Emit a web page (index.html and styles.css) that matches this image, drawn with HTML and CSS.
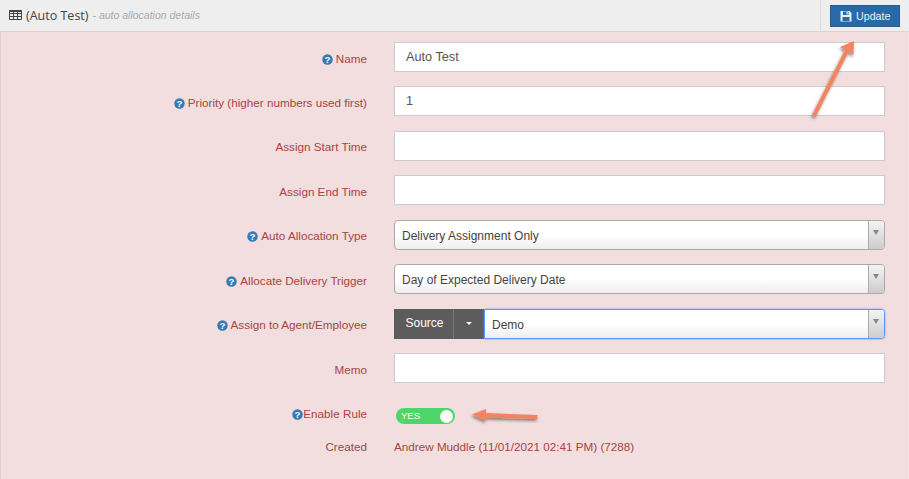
FILE: index.html
```html
<!DOCTYPE html>
<html lang="en">
<head>
<meta charset="utf-8">
<title>Auto Test</title>
<link rel="stylesheet" href="styles.css">
</head>
<body>
<header class="topbar">
  <div class="title">
    <svg class="table-icon" width="13" height="12" viewBox="0 0 13 12"><path d="M.5 1.500h12v9H.5zM.5 4.500h12M.5 7.500h12M4.500 1.500v9M8.500 1.500v9" fill="none" stroke="#444" stroke-width="1"/><path d="M.5 1h12v2h-12z" fill="#444"/></svg>
    <span class="title-main">(Auto Test)</span>
    <span class="title-sub">- auto allocation details</span>
  </div>
  <div class="actions">
    <button class="btn-update" type="button">
      <svg width="12" height="12" viewBox="0 0 12 12"><path d="M.5 1h9l2 2v8.500H.5z" fill="#e4eef8"/><path d="M3 1.500h5.500v3.500H3zM2.500 7h7v4H2.500z" fill="#2a69a8"/><path d="M6.500 2h1.300v2.500H6.500z" fill="#e4eef8"/></svg>
      Update
    </button>
  </div>
</header>
<main class="form">
  <div class="row"><label class="lbl"><svg class="help"><use href="#q"/></svg>Name</label><div class="field"><input class="text" value="Auto Test"></div></div>
  <div class="row"><label class="lbl"><svg class="help"><use href="#q"/></svg>Priority (higher numbers used first)</label><div class="field"><input class="text" value="1"></div></div>
  <div class="row"><label class="lbl">Assign Start Time</label><div class="field"><input class="text"></div></div>
  <div class="row"><label class="lbl">Assign End Time</label><div class="field"><input class="text"></div></div>
  <div class="row"><label class="lbl"><svg class="help"><use href="#q"/></svg>Auto Allocation Type</label><div class="field"><div class="select"><span class="sel-text">Delivery Assignment Only</span><span class="sel-arrow"></span></div></div></div>
  <div class="row"><label class="lbl"><svg class="help"><use href="#q"/></svg>Allocate Delivery Trigger</label><div class="field"><div class="select"><span class="sel-text">Day of Expected Delivery Date</span><span class="sel-arrow"></span></div></div></div>
  <div class="row"><label class="lbl"><svg class="help"><use href="#q"/></svg>Assign to Agent/Employee</label><div class="field group"><span class="src">Source</span><span class="src-caret"><i></i></span><div class="select focus"><span class="sel-text">Demo</span><span class="sel-arrow"></span></div></div></div>
  <div class="row"><label class="lbl">Memo</label><div class="field"><input class="text"></div></div>
  <div class="row row-toggle"><label class="lbl lbl-toggle"><svg class="help tight"><use href="#q"/></svg>Enable Rule</label><div class="field"><span class="toggle"><span class="yes">YES</span><span class="knob"></span></span></div></div>
  <div class="row row-created"><label class="lbl">Created</label><div class="field value">Andrew Muddle (11/01/2021 02:41 PM) (7288)</div></div>
</main>
<svg class="defs" width="0" height="0"><defs><symbol id="q" viewBox="0 0 12 12"><circle cx="6" cy="6" r="5.700" fill="#337ab7"/><text x="6" y="9.700" text-anchor="middle" font-family="Liberation Sans" font-weight="700" font-size="10.500" fill="#fff">?</text></symbol></defs></svg>
<svg class="arrows" width="909" height="479" viewBox="0 0 909 479">
  <defs><filter id="sh" x="-30%" y="-30%" width="160%" height="160%"><feDropShadow dx="-1" dy="2" stdDeviation="1.500" flood-color="#000" flood-opacity=".45"/></filter></defs>
  <g filter="url(#sh)" fill="#f4845f">
    <path d="M854 41l-.5 14-5-3-33 65-3.500-2 33-65-5-3z"/>
    <path d="M472 414.500l14-5.500v4l51.500 2v4l-51.500-1.500v3.500z"/>
  </g>
</svg>
</body>
</html>
```
FILE: styles.css
```css
* { box-sizing: border-box; }
html, body { margin: 0; height: 100%; overflow: hidden; }
body { display: flex; flex-direction: column; font-family: "Liberation Sans", Arial, sans-serif; font-size: 11.7px; background: #f2dede; color: #a94442; position: relative; }
.topbar { display: flex; justify-content: space-between; flex: none; height: 32px; background: #eee; border-bottom: 1px solid #ddd; }
.title { display: flex; align-items: center; padding-left: 9px; padding-bottom: 1px; }
.table-icon { margin-right: 4px; }
.title-main { font-family: "Open Sans", sans-serif; font-size: 12.5px; color: #444; }
.title-sub { font-style: italic; font-size: 10.5px; color: #aaa; margin-left: 4px; }
.actions { width: 89px; border-left: 1px solid #ddd; padding: 5px 0 0 9px; }
.btn-update { display: flex; align-items: center; gap: 4px; width: 70px; height: 22px; padding: 0 0 0 9px; background: #2a69a8; border: 1px solid #285e8e; color: #e8f0f8; font: 10.700px "Liberation Sans", Arial, sans-serif; }
.form { flex: 1; padding-top: 10px; border: 1px solid #ebcccc; border-bottom: 0; border-right-color: #f5e4e4; margin-top: -1px; }
.row { display: flex; align-items: center; height: 30px; margin-bottom: 14.45px; }
.lbl { width: 366px; text-align: right; line-height: 30px; padding-top: 3px; flex: none; }
.help { width: 11px; height: 11px; vertical-align: -2px; margin-right: 3px; }
.help.tight { margin-right: 0; }
.field { margin-left: 27px; width: 491px; flex: none; }
.text { display: block; width: 100%; height: 30px; padding: 0 11px; background: #fff; border: 1px solid #ccc; font: 12.700px "Liberation Sans", Arial, sans-serif; color: #555; outline: none; }
.group { display: flex; height: 30px; }
.select { flex: 1; display: flex; height: 30px; border: 1px solid #aaa; border-radius: 4px; background: linear-gradient(#fff 50%, #eee); color: #444; font-size: 12px; }
.select.focus { border-color: #5897fb; border-radius: 0 4px 4px 0; box-shadow: 0 0 2px #5897fb; }
.sel-text { flex: 1; line-height: 30px; padding-left: 7px; }
.sel-arrow { width: 16px; border-left: 1px solid #aaa; background: linear-gradient(#f4f4f4, #ccc); position: relative; border-radius: 0 3px 3px 0; }
.sel-arrow::after { content: ""; position: absolute; left: 4px; top: 9px; border: 3.500px solid transparent; border-top: 5px solid #888; border-bottom: 0; }
.src { width: 60px; padding-left: 2px; background: #5c5c5c; color: #fff; font-size: 12px; line-height: 28px; text-align: center; border-right: 1px solid #777; }
.src-caret { width: 30px; background: #5c5c5c; display: flex; align-items: center; justify-content: center; }
.src-caret i { border: 3.500px solid transparent; border-top-color: #fff; border-bottom: 0; }
.row-toggle { height: 20px; margin-top: 23.4px; margin-bottom: 11.5px; }
.lbl-toggle { line-height: 26px; padding-top: 0; padding-bottom: 4px; }
.toggle { display: flex; align-items: center; justify-content: space-between; width: 59px; height: 16px; margin-left: 2px; padding: 0 2px 0 5px; background: #4fd66b; border-radius: 8px; }
.yes { color: #fff; font-size: 9.500px; padding-bottom: 1px; }
.knob { width: 13px; height: 13px; background: #fff; border-radius: 50%; }
.row-created { height: 20px; }
.row-created .lbl { line-height: 20px; padding: 0 0 2px; }
.value { line-height: 20px; padding-bottom: 2px; }
.defs { position: absolute; }
.arrows { position: absolute; left: 0; top: 0; pointer-events: none; }
```
